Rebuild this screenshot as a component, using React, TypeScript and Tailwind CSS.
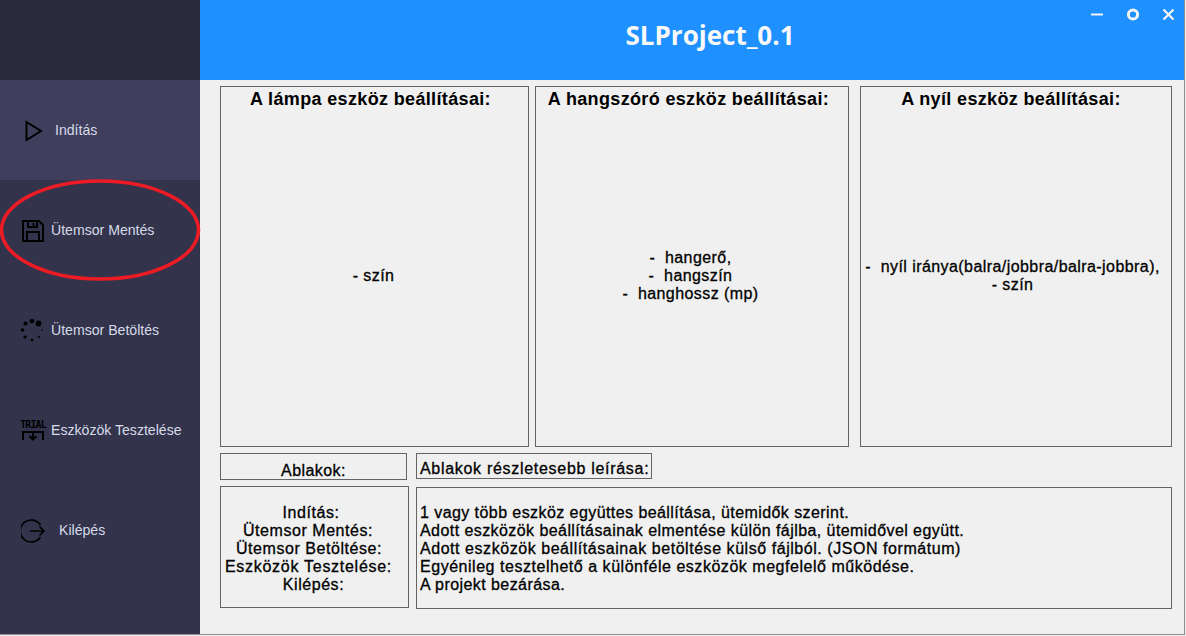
import React from "react";

const sans = "font-['Liberation_Sans',Arial,sans-serif]";
const ink = "text-black [-webkit-text-stroke:0.3px_black]";
const body = "text-[16px] tracking-[0.43px]";

function PlayIcon() {
  return (
    <svg width="18" height="22" viewBox="0 0 18 22" className="block">
      <path d="M1.5 2 L16 11 L1.5 20 Z" fill="none" stroke="#000" strokeWidth="2" />
    </svg>
  );
}

function SaveIcon() {
  return (
    <svg width="22" height="22" viewBox="0 0 22 22" className="block">
      <path d="M1 1 H17 L21 5 V21 H1 Z" fill="none" stroke="#000" strokeWidth="2" />
      <path d="M6 1 V7 H15 V1 M11.5 3 V5.5" fill="none" stroke="#000" strokeWidth="2" />
      <path d="M5 21 V12 H17 V21" fill="none" stroke="#000" strokeWidth="2" />
    </svg>
  );
}

function SpinnerIcon() {
  return (
    <svg width="24" height="24" viewBox="0 0 24 24" className="block">
      <circle cx="18.5" cy="4.5" r="2.9" fill="#000" />
      <circle cx="12" cy="2" r="2.3" fill="#000" />
      <circle cx="5.5" cy="4.5" r="2" fill="#000" />
      <circle cx="2.5" cy="11" r="1.8" fill="#000" />
      <circle cx="5" cy="18" r="1.6" fill="#000" />
      <circle cx="12" cy="21" r="1.3" fill="#000" />
      <circle cx="19" cy="18" r="1.1" fill="#000" />
      <circle cx="22" cy="11" r="0.8" fill="#000" />
    </svg>
  );
}

function TrialIcon() {
  return (
    <div className="flex w-[26px] flex-col items-center">
      <span className="font-['DejaVu_Sans_Mono',monospace] text-[10px] font-bold leading-[10px] tracking-[-0.9px] text-black">TRIAL</span>
      <svg width="22" height="11" viewBox="0 0 22 11" className="block">
        <path d="M1 10 V2 H21 V10" fill="none" stroke="#000" strokeWidth="2" />
        <path d="M11 2 V9 M7.5 6 L11 9.5 L14.5 6" fill="none" stroke="#000" strokeWidth="2" />
      </svg>
    </div>
  );
}

function ExitIcon() {
  return (
    <svg width="24" height="24" viewBox="0 0 24 24" className="block">
      <path d="M19.5 6 A11 11 0 1 0 19.5 18" fill="none" stroke="#000" strokeWidth="1.7" />
      <path d="M9 12 H23 M18.5 7.5 L23 12 L18.5 16.5" fill="none" stroke="#000" strokeWidth="1.7" />
    </svg>
  );
}

const items = [
  { label: "Indítás", icon: <PlayIcon />, active: true, iconBox: "w-[18px] ml-[25px]", gap: "ml-[12px]" },
  { label: "Ütemsor Mentés", icon: <SaveIcon />, active: false, iconBox: "w-[22px] ml-[22px]", gap: "ml-[7px]" },
  { label: "Ütemsor Betöltés", icon: <SpinnerIcon />, active: false, iconBox: "w-[24px] ml-[20px]", gap: "ml-[7px]" },
  { label: "Eszközök Tesztelése", icon: <TrialIcon />, active: false, iconBox: "w-[26px] ml-[20px]", gap: "ml-[5px]" },
  { label: "Kilépés", icon: <ExitIcon />, active: false, iconBox: "w-[24px] ml-[21px]", gap: "ml-[14px]" },
];

function Box({ className, children }: { className: string; children?: React.ReactNode }) {
  return <div className={`border border-[#646464] ${className}`}>{children}</div>;
}

function Panel({ title, lines, className, titleInset, bodyInset }: { title: string; lines: string[]; className: string; titleInset: string; bodyInset: string }) {
  return (
    <Box className={`flex h-[361px] flex-col ${className}`}>
      <div className={`pt-[1px] text-center text-[18px] font-bold leading-[22px] tracking-[0.35px] text-black ${titleInset}`}>{title}</div>
      <div className={`flex flex-1 flex-col items-center justify-center pb-[4px] leading-[18px] ${body} ${ink} ${bodyInset}`}>
        {lines.map((l) => (
          <div key={l} className="whitespace-pre">{l}</div>
        ))}
      </div>
    </Box>
  );
}

export default function App() {
  return (
    <div className={`h-[636px] w-[1186px] overflow-hidden bg-[#f0f0f0] ${sans}`}>
      <div className="relative flex h-[635px] w-[1185px] border-b border-r border-[#8f8f8f]">
        <aside className="flex w-[200px] shrink-0 flex-col bg-[#33334c]">
          <div className="h-[80px] bg-[#2a2a3d]" />
          {items.map((it) => (
            <div key={it.label} className={`flex h-[100px] items-center pt-[1px] ${it.active ? "bg-[#3f3e5c]" : ""}`}>
              <div className={`flex justify-center ${it.iconBox}`}>{it.icon}</div>
              <span className={`whitespace-nowrap text-[14.1px] text-[#d6dbe8] ${it.gap}`}>{it.label}</span>
            </div>
          ))}
        </aside>

        <main className="flex min-w-0 flex-1 flex-col">
          <header className="relative flex h-[80px] shrink-0 items-center justify-center bg-[#1e90ff] pb-[9px] pl-[36px]">
            <h1 className="font-['Open_Sans',sans-serif] text-[26px] font-bold text-[#f8f8f8]">SLProject_0.1</h1>
            <div className="absolute right-[9px] top-[8px] flex items-center gap-[22px]">
              <svg width="13" height="13" viewBox="0 0 13 13"><path d="M0 6.5 H12" stroke="#f3f3f3" strokeWidth="2" /></svg>
              <svg width="14" height="13" viewBox="0 0 14 13"><circle cx="7" cy="6.5" r="4.6" fill="none" stroke="#f3f3f3" strokeWidth="3" /></svg>
              <svg width="13" height="13" viewBox="0 0 13 13"><path d="M1.5 1.5 L11.5 11.5 M11.5 1.5 L1.5 11.5" stroke="#f3f3f3" strokeWidth="2.2" /></svg>
            </div>
          </header>

          <div className="flex flex-col pl-[20px] pt-[6px]">
            <div className="flex">
              <Panel className="w-[309px]" titleInset="pr-[8px]" bodyInset="pr-[2px]" title="A lámpa eszköz beállításai:" lines={["- szín"]} />
              <Panel className="ml-[6px] w-[314px]" titleInset="pr-[7px]" bodyInset="pr-[3px]" title="A hangszóró eszköz beállításai:" lines={["-  hangerő,", "-  hangszín", "-  hanghossz (mp)"]} />
              <Panel className="ml-[11px] w-[312px]" titleInset="pr-[10px]" bodyInset="pr-[7px]" title="A nyíl eszköz beállításai:" lines={["-  nyíl iránya(balra/jobbra/balra-jobbra),", "- szín"]} />
            </div>

            <div className="mt-[6px] flex items-start">
              <Box className={`flex h-[27px] w-[187px] items-end justify-center leading-[16px] ${body} ${ink}`}>Ablakok:</Box>
              <Box className={`ml-[9px] flex h-[26px] w-[236px] items-end pl-[3px] leading-[18px] text-[16px] tracking-[0.7px] ${ink}`}>Ablakok részletesebb leírása:</Box>
            </div>

            <div className="mt-[6px] flex items-start">
              <Box className={`flex h-[122px] w-[189px] flex-col items-center justify-center pr-[7px] pt-[3px] text-[16px] leading-[18px] tracking-[0.55px] ${ink}`}>
                <div>Indítás:</div>
                <div className="mr-[6px]">Ütemsor Mentés:</div>
                <div className="mr-[4px]">Ütemsor Betöltése:</div>
                <div className="mr-[5px] tracking-[0.72px]">Eszközök Tesztelése:</div>
                <div className="ml-[5px]">Kilépés:</div>
              </Box>
              <Box className={`ml-[7px] mt-[1px] flex h-[122px] w-[756px] flex-col justify-center pl-[3px] pt-[2px] leading-[18px] ${body} ${ink}`}>
                <div>1 vagy több eszköz együttes beállítása, ütemidők szerint.</div>
                <div>Adott eszközök beállításainak elmentése külön fájlba, ütemidővel együtt.</div>
                <div className="tracking-[0.55px]">Adott eszközök beállításainak betöltése külső fájlból. (JSON formátum)</div>
                <div className="tracking-[0.53px]">Egyénileg tesztelhető a különféle eszközök megfelelő működése.</div>
                <div>A projekt bezárása.</div>
              </Box>
            </div>
          </div>
        </main>

        <svg width="202" height="104" viewBox="0 0 202 104" className="absolute left-0 top-[178px]">
          <ellipse cx="100" cy="52" rx="98.5" ry="49" fill="none" stroke="#ed1c24" strokeWidth="3.5" />
        </svg>
      </div>
    </div>
  );
}
